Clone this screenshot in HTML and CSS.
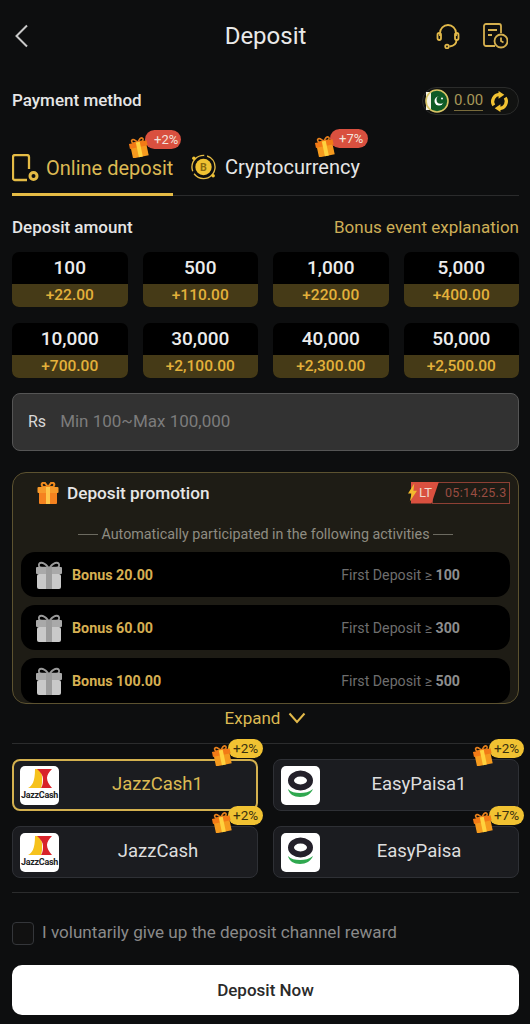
FILE: index.html
```html
<!DOCTYPE html>
<html lang="en">
<head>
<meta charset="utf-8">
<title>Deposit</title>
<link rel="stylesheet" href="styles.css">
</head>
<body>
<svg class="defs" width="0" height="0" aria-hidden="true">
  <defs>
    <symbol id="gift" viewBox="0 0 22 21">
      <g transform="rotate(-12 11 11)">
        <path d="M6 5C4 2 6 1 8 2l3 3 3-3c2-1 4 0 2 3z" fill="none" stroke="#e8801c" stroke-width="1.6"/>
        <rect x="3" y="8" width="16" height="12" fill="#f59a1e"/>
        <rect x="2" y="5" width="18" height="5" fill="#f27a16"/>
        <rect x="9" y="5" width="4" height="15" fill="#ffd23e"/>
      </g>
    </symbol>
    <symbol id="jazz" viewBox="0 0 24 20">
      <path d="M7 0h6c1 7 2 13 0 19H0c4-2 7-6 7-19z" fill="#f6c21c"/>
      <path d="M9 0h15c-3 3-5 6-5 9s2 7 5 10H13c2-3 2-6 2-9s-2-7-6-10z" fill="#d8232a"/>
    </symbol>
    <symbol id="easy" viewBox="0 0 39 39">
      <ellipse cx="19.500" cy="14.500" rx="9.500" ry="7" fill="none" stroke="#23202a" stroke-width="6"/>
      <path d="M7 23c1 5 6 8 12 8 6 0 11-3 13-8-4 3-8 4-13 4-5 0-9-1-12-4z" fill="#2fa84f"/>
    </symbol>
    <symbol id="present" viewBox="0 0 28 30">
      <path d="M13 7C8 1 3 2 4 6c0 2 5 2 9 1zm2 0c5-6 10-5 9-1 0 2-5 2-9 1z" fill="none" stroke="#9a9a9a" stroke-width="1.8"/>
      <rect x="1" y="7" width="26" height="7" rx="1" fill="#a9a9a9"/>
      <rect x="2" y="14" width="24" height="15" rx="2" fill="#c9c9c9"/>
      <rect x="11" y="7" width="6" height="22" fill="#9c9c9c"/>
    </symbol>
  </defs>
</svg>

<main class="page">
  <header class="topbar">
    <svg class="back" viewBox="0 0 14 24"><path d="M12.500 1.500 2 12l10.500 10.500" fill="none" stroke="#c9c9c9" stroke-width="2"/></svg>
    <h1 class="title">Deposit</h1>
    <div class="top-icons">
      <svg class="ico-head" viewBox="0 0 24 26" fill="none" stroke="#e2b94a" stroke-width="1.800"><path d="M4 13V10a8 8 0 0 1 16 0v3"/><rect x="1.500" y="10" width="3.500" height="7" rx="1.700"/><rect x="19" y="10" width="3.500" height="7" rx="1.700"/><path d="M20.500 17c0 4-3 6-7 6.500"/><circle cx="11" cy="23.500" r="1.800"/></svg>
      <svg class="ico-rec" viewBox="0 0 25 26" fill="none" stroke="#d5b04e" stroke-width="1.800"><path d="M12 23H3a2 2 0 0 1-2-2V3a2 2 0 0 1 2-2h13a2 2 0 0 1 2 2v7"/><path d="M5 7h9M5 12h4"/><circle cx="18" cy="18" r="6.500"/><path d="M18 14.500V18l2.500 1.500"/></svg>
    </div>
  </header>

  <section class="pay-row">
    <h2 class="sec-title">Payment method</h2>
    <div class="balance">
      <svg class="flag" viewBox="0 0 24 24"><circle cx="12" cy="12" r="11" fill="#0e5a26"/><rect x="1" y="3" width="5" height="18" fill="#f3f1e2"/><circle cx="14" cy="12" r="4.500" fill="#fff"/><circle cx="15.500" cy="10.800" r="4" fill="#0e5a26"/><circle cx="17" cy="9.500" r="1" fill="#fff"/><circle cx="12" cy="12" r="11" fill="none" stroke="#d8c465" stroke-width="1.600"/></svg>
      <span class="bal-num">0.00</span>
      <svg class="refresh" viewBox="0 0 22 22" fill="none" stroke="#f1c232" stroke-width="3.400"><path d="M11 3.500a7.500 7.500 0 0 0-6 11.500"/><path d="M11 18.500a7.500 7.500 0 0 0 6-11.500"/><path d="M10 0l6 4-6 4z" fill="#f1c232" stroke="none"/><path d="M12 22l-6-4 6-4z" fill="#f1c232" stroke="none"/></svg>
    </div>
  </section>

  <nav class="tabs">
    <div class="tab tab-on">
      <svg class="tab-ico" viewBox="0 0 27 28" fill="none" stroke="#e4bb45" stroke-width="2.300"><path d="M15 26H3a2 2 0 0 1-2-2V3a2 2 0 0 1 2-2h12a2 2 0 0 1 2 2v12"/><circle cx="21.500" cy="22" r="3.500" stroke-width="3"/></svg>
      <span class="tab-label">Online deposit</span>
      <span class="tag tag-red tag-one">+2%</span>
      <svg class="tag-gift gift-one"><use href="#gift"/></svg>
    </div>
    <div class="tab">
      <svg class="tab-ico coin" viewBox="0 0 28 28"><circle cx="14" cy="14" r="12" fill="none" stroke="#e4bb45" stroke-width="1.400" stroke-dasharray="30 3 24 3"/><circle cx="14" cy="14" r="8.500" fill="#f0c232"/><text x="14" y="18" text-anchor="middle" class="coin-b">B</text><circle cx="4" cy="5" r="1.800" fill="#f0c232"/><circle cx="24" cy="23" r="1.800" fill="#f0c232"/></svg>
      <span class="tab-label">Cryptocurrency</span>
      <span class="tag tag-red tag-two">+7%</span>
      <svg class="tag-gift gift-two"><use href="#gift"/></svg>
    </div>
  </nav>

  <section class="amount-head">
    <h2 class="sec-title">Deposit amount</h2>
    <a class="explain">Bonus event explanation</a>
  </section>

  <section class="amounts">
    <div class="amt"><b>100</b><i>+22.00</i></div>
    <div class="amt"><b>500</b><i>+110.00</i></div>
    <div class="amt"><b>1,000</b><i>+220.00</i></div>
    <div class="amt"><b>5,000</b><i>+400.00</i></div>
    <div class="amt"><b>10,000</b><i>+700.00</i></div>
    <div class="amt"><b>30,000</b><i>+2,100.00</i></div>
    <div class="amt"><b>40,000</b><i>+2,300.00</i></div>
    <div class="amt"><b>50,000</b><i>+2,500.00</i></div>
  </section>

  <div class="field"><span class="cur">Rs</span><span class="ph">Min 100~Max 100,000</span></div>

  <section class="promo">
    <div class="promo-head">
      <svg class="promo-gift" viewBox="0 0 22 22"><path d="M6 5C3 2 6 0 8 1l3 4 3-4c2-1 5 1 2 4z" fill="none" stroke="#f08a1e" stroke-width="2"/><rect x="2" y="10" width="18" height="12" rx="1" fill="#f5821f"/><rect x="0.500" y="5" width="21" height="6" rx="1" fill="#f79a2a"/><rect x="9" y="5" width="4" height="17" fill="#ffc64a"/></svg>
      <h3 class="promo-title">Deposit promotion</h3>
      <div class="timer">
        <svg class="bolt" viewBox="0 0 10 20"><path d="M7 0 0 11h4l-2 9 8-12H6z" fill="#f2b92e"/></svg>
        <span class="lt">LT</span>
        <span class="time">05:14:25.3</span>
      </div>
    </div>
    <p class="auto"><span class="dash"></span>Automatically participated in the following activities<span class="dash"></span></p>
    <div class="bonus"><svg class="present"><use href="#present"/></svg><span class="b-name">Bonus 20.00</span><span class="b-cond">First Deposit ≥ <b>100</b></span></div>
    <div class="bonus"><svg class="present"><use href="#present"/></svg><span class="b-name">Bonus 60.00</span><span class="b-cond">First Deposit ≥ <b>300</b></span></div>
    <div class="bonus"><svg class="present"><use href="#present"/></svg><span class="b-name">Bonus 100.00</span><span class="b-cond">First Deposit ≥ <b>500</b></span></div>
  </section>

  <div class="expand">Expand <svg class="chev" viewBox="0 0 18 12"><path d="M1.500 1.500 9 10l7.500-8.500" fill="none" stroke="#e2b94a" stroke-width="2"/></svg></div>

  <hr class="rule">

  <section class="channels">
    <div class="chan chan-on">
      <span class="logo"><svg class="jazz-mark"><use href="#jazz"/></svg><span class="jazz-txt">JazzCash</span></span>
      <span class="chan-name">JazzCash1</span>
      <span class="tag tag-gold">+2%</span><svg class="tag-gift gift-chan"><use href="#gift"/></svg>
    </div>
    <div class="chan">
      <span class="logo"><svg class="easy-mark"><use href="#easy"/></svg></span>
      <span class="chan-name">EasyPaisa1</span>
      <span class="tag tag-gold">+2%</span><svg class="tag-gift gift-chan"><use href="#gift"/></svg>
    </div>
    <div class="chan">
      <span class="logo"><svg class="jazz-mark"><use href="#jazz"/></svg><span class="jazz-txt">JazzCash</span></span>
      <span class="chan-name">JazzCash</span>
      <span class="tag tag-gold">+2%</span><svg class="tag-gift gift-chan"><use href="#gift"/></svg>
    </div>
    <div class="chan">
      <span class="logo"><svg class="easy-mark"><use href="#easy"/></svg></span>
      <span class="chan-name">EasyPaisa</span>
      <span class="tag tag-gold">+7%</span><svg class="tag-gift gift-chan"><use href="#gift"/></svg>
    </div>
  </section>

  <hr class="rule rule-two">

  <label class="waive"><span class="box"></span><span>I voluntarily give up the deposit channel reward</span></label>

  <button class="submit">Deposit Now</button>
</main>
</body>
</html>
```

FILE: styles.css
```css
* { box-sizing: border-box; }
html, body { margin: 0; padding: 0; background: #0d0e0f; }
body { font-family: Roboto, "Liberation Sans", sans-serif; color: #e8e8e8; }
.defs { position: absolute; }
.page { width: 530px; height: 1024px; overflow: hidden; padding: 0 11px 0 12px; display: flex; flex-direction: column; background: #0d0e0f; }

.topbar { height: 72px; flex: none; display: grid; grid-template-columns: 1fr auto 1fr; align-items: center; }
.back { width: 15px; height: 24px; margin-left: 2px; }
.title { margin: 0; font-size: 24px; font-weight: 400; color: #e9e9e9; }
.top-icons { display: flex; justify-content: flex-end; gap: 23px; padding-right: 11px; }
.ico-head { width: 24px; height: 26px; }
.ico-rec { width: 25px; height: 26px; }

.pay-row { flex: none; margin-top: 15px; height: 28px; display: flex; align-items: center; justify-content: space-between; }
.pay-row .sec-title { margin-bottom: 2px; }
.sec-title { margin: 0; font-size: 17px; font-weight: 500; color: #e6e6e6; }
.balance { height: 28px; width: 97px; border: 1px solid #2b2c2b; border-radius: 14px; background: #111211; display: flex; align-items: center; gap: 5px; padding-left: 2px; }
.flag { width: 24px; height: 24px; flex: none; }
.bal-num { font-size: 15px; color: #a89858; border-bottom: 1px solid #7a6c3c; line-height: 19px; }
.refresh { width: 21px; height: 21px; flex: none; margin-left: 1px; }

.tabs { flex: none; height: 81px; display: flex; align-items: flex-end; border-bottom: 1px solid #2a2b2c; }
.tab { position: relative; height: 53px; padding: 8px 0 11px; display: flex; align-items: center; font-size: 20px; color: #e6e6e6; }
.tab-label { white-space: nowrap; }
.tab-on { width: 161px; color: #dcb953; border-bottom: 3px solid #e4bb45; padding-bottom: 8px; margin-bottom: -1px; }
.tab-ico { width: 27px; height: 28px; margin-right: 7px; flex: none; }
.coin { margin-left: 17px; margin-right: 8px; }
.coin-b { font: 700 11px Roboto, sans-serif; fill: #8a6a10; }

.tag { position: absolute; height: 19px; border-radius: 10px; font-size: 13px; line-height: 19px; padding-left: 9px; width: 36px; }
.tag-red { background: #d9503f; color: #f3e4dc; }
.tag-one { left: 133px; top: -13px; }
.tag-two { left: 157px; top: -13px; width: 38px; }
.tag-gift { position: absolute; width: 22px; height: 21px; }
.gift-one { left: 116px; top: -6px; }
.gift-two { left: 141px; top: -6px; }

.amount-head { flex: none; margin-top: 18px; height: 26px; margin-bottom: 1px; display: flex; align-items: center; justify-content: space-between; }
.explain { font-size: 17px; color: #cdae57; }

.amounts { flex: none; margin-top: 11px; display: grid; grid-template-columns: repeat(4, 1fr); column-gap: 15px; row-gap: 16px; }
.amt { height: 55px; border-radius: 7px; overflow: hidden; background: #000; display: flex; flex-direction: column; }
.amt b { height: 32px; flex: none; font-size: 19px; font-weight: 500; line-height: 32px; text-align: center; color: #ececec; }
.amt i { flex: 1; font-style: normal; font-size: 15.500px; font-weight: 500; line-height: 23px; text-align: center; background: #453a17; color: #e3b13b; }

.field { flex: none; margin-top: 15px; height: 58px; border: 1px solid #555; border-radius: 8px; background: #323232; display: flex; align-items: center; padding: 0 0 2px 15px; font-size: 17px; }
.cur { color: #d8d8d8; font-size: 16px; margin-right: 14px; }
.ph { color: #7c7c7c; }

.promo { flex: none; margin-top: 21px; height: 232px; overflow: hidden; border: 1px solid #5c5230; border-radius: 14px; background: #1e1c15; padding: 0 8px; }
.promo-head { height: 41px; display: flex; align-items: center; padding: 0 0 2px 16px; }
.promo-gift { width: 22px; height: 22px; flex: none; }
.promo-title { margin: 0 0 0 8px; font-size: 17.200px; font-weight: 500; color: #e6e6e6; }
.timer { margin-left: auto; height: 22px; display: flex; align-items: stretch; position: relative; }
.lt { width: 30px; background: #d9503f; color: #f0d8cc; font-size: 13px; line-height: 21px; padding-left: 10px; clip-path: polygon(2px 0, 100% 0, 75% 100%, 2px 100%); }
.bolt { position: absolute; left: -1px; top: 1px; width: 9px; height: 19px; z-index: 1; }
.time { width: 78px; margin-left: -7px; padding-left: 12px; border: 1px solid #8e4034; color: #9a4d42; font-size: 12.500px; line-height: 20px; letter-spacing: 0.300px; }
.auto { margin: 0; height: 38px; padding-top: 2px; display: flex; align-items: center; justify-content: center; gap: 3px; font-size: 14.300px; color: #8e8c82; }
.dash { width: 20px; height: 1px; background: #6c6a60; }
.bonus { height: 45px; border-radius: 14px; background: #000; display: flex; align-items: center; padding: 0 50px 0 14px; margin-bottom: 8px; }
.present { width: 28px; height: 30px; flex: none; }
.b-name { margin-left: 9px; font-size: 14.300px; font-weight: 700; color: #d6af52; }
.b-cond { margin-left: auto; font-size: 14.200px; color: #6e6e6e; }
.b-cond b { font-weight: 700; color: #8e8e8e; }

.expand { flex: none; margin-top: 2px; height: 24px; display: flex; align-items: center; justify-content: center; gap: 8px; font-size: 17px; color: #dcb953; }
.chev { width: 18px; height: 12px; }

.rule { flex: none; width: 100%; margin: 13px 0 0; border: 0; height: 1px; background: #2b2c2d; }

.channels { flex: none; margin-top: 15px; display: grid; grid-template-columns: 246px 246px; column-gap: 15px; row-gap: 15px; }
.chan { position: relative; height: 52px; border: 1px solid #2e3035; border-radius: 8px; background: #1b1c20; display: flex; align-items: center; padding-left: 7px; font-size: 18.500px; color: #dedede; }
.chan-on { border: 2px solid #d4b14f; padding-left: 6px; color: #dcb953; }
.logo { position: relative; width: 39px; height: 39px; flex: none; background: #fff; border-radius: 5px; display: flex; flex-direction: column; align-items: center; overflow: hidden; }
.jazz-mark { width: 24px; height: 20px; margin-top: 3px; flex: none; }
.jazz-txt { font-size: 9px; font-weight: 700; line-height: 11px; color: #222; letter-spacing: -0.300px; margin-top: 1px; white-space: nowrap; }
.easy-mark { width: 39px; height: 39px; flex: none; }
.chan-name { flex: 1; text-align: center; padding-bottom: 2px; }
.tag-gold { background: #f1c232; color: #3a3110; top: -21px; right: -6px; width: 35px; padding-left: 5px; font-size: 13.500px; }
.gift-chan { left: 198px; top: -15px; }
.chan-on .tag-gold { top: -22px; right: -7px; }
.chan-on .gift-chan { left: 197px; top: -16px; }

.rule-two { margin-top: 14px; }

.waive { flex: none; margin-top: 29px; height: 23px; display: flex; align-items: center; gap: 8px; font-size: 17.100px; color: #8a8a8a; }
.waive span:last-child { margin-bottom: 3px; }
.box { width: 22px; height: 23px; border: 1.500px solid #34363a; border-radius: 4px; background: #111; flex: none; }

.submit { flex: none; margin-top: 20px; height: 50px; width: 100%; border: 0; border-radius: 10px; background: #fff; font: 500 17px Roboto, sans-serif; color: #2a2a2a; }
```
